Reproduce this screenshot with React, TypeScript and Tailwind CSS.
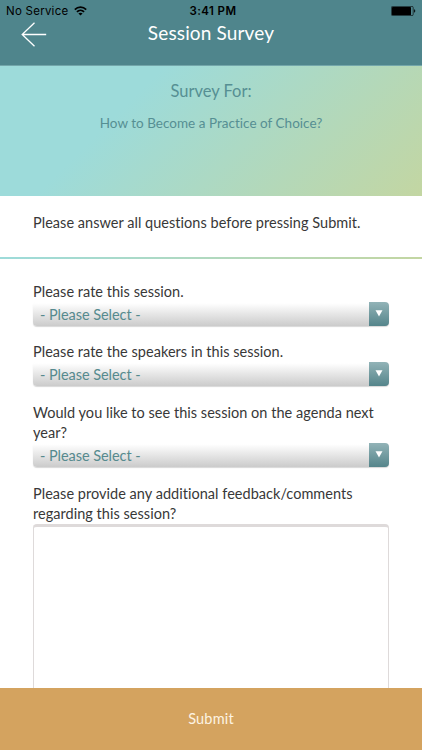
import React from 'react';

interface SelectFieldProps {
    id: string;
    label: string;
    className: string;
}

function SelectField({ id, label, className }: SelectFieldProps) {
    return (
        <div className={className}>
            <label htmlFor={id} className="block">{label}</label>
            <button id={id} type="button" className="flex h-6 w-full rounded-[4px] overflow-hidden bg-gradient-to-b from-white from-5% to-[#cbcbcb] text-left shadow-[0_1px_1px_#d8d8d8]">
                <span className="flex-1 pl-[7px] leading-[25px] tracking-[-0.05px] text-[#568a8e]">- Please Select -</span>
                <span className="flex h-6 w-5 justify-center bg-gradient-to-b from-[#92b3b7] to-[#55858b] pt-2 pr-px">
                    <svg width="8" height="7" viewBox="0 0 8 7" fill="white">
                        <path d="M0.5 0.2h7L4 6.5z" />
                    </svg>
                </span>
            </button>
        </div>
    );
}

export default function App() {
    return (
        <div className="flex h-[750px] w-full flex-col overflow-hidden bg-white font-['Lato',sans-serif] text-[14.5px] leading-5 text-[#383838]">
            <header className="h-[66px] shrink-0 border-b border-[#73a6aa] bg-[#4f858c]">
                <div className="grid h-[22px] grid-cols-3 items-center px-[6px] font-['Inter',sans-serif] text-[11.5px] leading-[22px] text-black">
                    <div className="flex items-center gap-[6px]">
                        <span className="tracking-[0.25px]">No Service</span>
                        <svg width="13" height="10" viewBox="0 0 13 10" fill="none" stroke="black" strokeWidth="1.7">
                            <path d="M0.8 3.6C4 0.4 9 0.4 12.2 3.6" />
                            <path d="M2.9 5.8c2-2 5.2-2 7.2 0" />
                            <path d="M6.5 9.6L4.4 7.5c1.2-1.1 3-1.1 4.2 0z" fill="black" stroke="none" />
                        </svg>
                    </div>
                    <span className="pl-1 text-center font-semibold tracking-[0.4px]">3:41 PM</span>
                    <svg className="justify-self-end" width="25" height="10" viewBox="0 0 25 10">
                        <rect x="0.4" y="0.4" width="21.8" height="9.2" rx="1.2" fill="none" stroke="black" strokeWidth="0.6" />
                        <rect x="1" y="1" width="19" height="8" rx="0.6" fill="black" />
                        <path d="M23.2 3.3c1.4 0.3 1.4 3.1 0 3.4z" fill="black" />
                    </svg>
                </div>
                <div className="grid grid-cols-[60px_1fr_60px]">
                    <button type="button" aria-label="Back" className="pl-[21px]">
                        <svg width="26" height="25" viewBox="0 0 26 25" fill="none" stroke="white" strokeWidth="1.3">
                            <path d="M25.2 12.5H1.2M13.5 0.8L1.2 12.5l12.3 11.8" />
                        </svg>
                    </button>
                    <h1 className="text-center text-[19px] leading-[21px] tracking-[0.15px] text-white">Session Survey</h1>
                </div>
            </header>

            <section className="h-[130px] shrink-0 bg-[linear-gradient(135deg,#9ddbda_0%,#9ddbda_30%,#c3d6a2_100%)] pt-[14px] text-center text-[#568f93]">
                <h2 className="text-[16.5px] leading-[22px]">Survey For:</h2>
                <p className="mt-[11px] text-[13.5px] tracking-[0.02px]">How to Become a Practice of Choice?</p>
            </section>

            <p className="h-[61px] shrink-0 pl-[33px] pt-[17px] tracking-[0.03px]">Please answer all questions before pressing Submit.</p>
            <div className="h-[2px] shrink-0 bg-gradient-to-r from-[#9ddbda] to-[#c3d6a2]" />

            <form className="flex min-h-0 flex-1 flex-col px-[33px] pt-[23px] tracking-[0.03px]">
                <SelectField id="session" label="Please rate this session." className="mb-[16px]" />
                <SelectField id="speakers" label="Please rate the speakers in this session." className="mb-[17px]" />
                <SelectField id="agenda" label="Would you like to see this session on the agenda next year?" className="mb-[17px]" />
                <label htmlFor="feedback" className="block">Please provide any additional feedback/comments regarding this session?</label>
                <textarea id="feedback" className="min-h-0 w-full flex-1 resize-none rounded-t-[4px] border border-b-0 border-t-[3px] border-[#dedada]" />
            </form>

            <button type="button" className="h-[62px] shrink-0 bg-[#d4a35f] text-[#fdf3e3] tracking-[0.2px]">Submit</button>
        </div>
    );
}
